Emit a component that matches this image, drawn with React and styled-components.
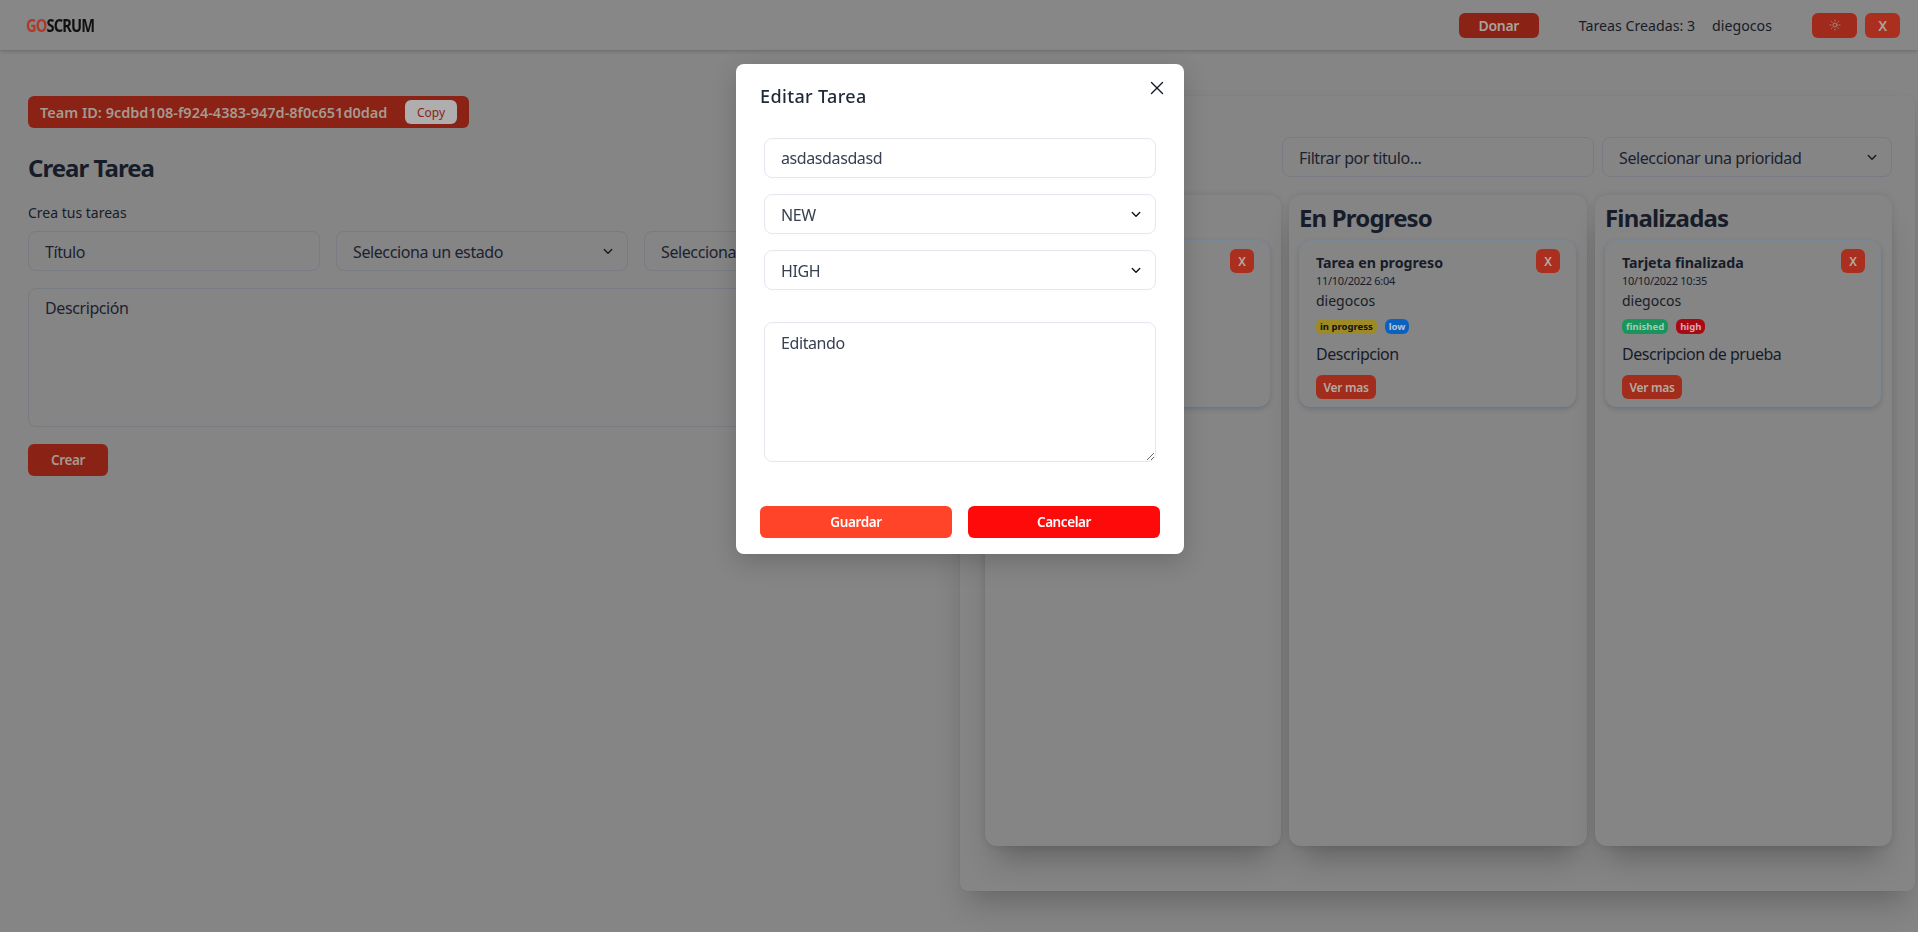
import { Sun, X } from 'lucide-react';
import styled, { createGlobalStyle } from 'styled-components';

const chevron = (color) =>
  `url("data:image/svg+xml,%3csvg xmlns='http://www.w3.org/2000/svg' viewBox='0 0 12 8'%3e%3cpath fill='none' stroke='${color}' stroke-width='1.7' stroke-linecap='round' stroke-linejoin='round' d='M1.5 1.5 6 6l4.5-4.5'/%3e%3c/svg%3e")`;

const GlobalStyle = createGlobalStyle`
  * {
    box-sizing: border-box;
  }

  html,
  body {
    margin: 0;
    height: 100%;
    overflow: hidden;
    background: #858585;
    font-family: "Noto Sans", "Open Sans", sans-serif;
    color: #171c28;
  }
`;

const Page = styled.div`
  width: 1918px;
  height: 932px;
  background: #858585;
`;

const Header = styled.header`
  display: flex;
  align-items: center;
  justify-content: space-between;
  height: 50px;
  padding: 0 18px 0 26px;
  background: #878787;
  box-shadow: 0 1px 4px rgba(0, 0, 0, 0.22);
`;

const Logo = styled.div`
  font-size: 17px;
  font-weight: 700;
  letter-spacing: -0.95px;
  color: #111;
  filter: blur(0.35px);
  transform: scaleX(0.86);
  transform-origin: left center;

  span {
    color: #ae3a2a;
  }
`;

const HeaderRight = styled.div`
  display: flex;
  align-items: center;
`;

const HeaderText = styled.span`
  font-size: 14.2px;
  margin-left: ${(props) => props.$gap}px;
`;

const HeaderButton = styled.button`
  display: flex;
  align-items: center;
  justify-content: center;
  width: ${(props) => props.$width}px;
  height: 25px;
  margin-left: ${(props) => props.$gap}px;
  border: none;
  border-radius: 6px;
  background: ${(props) => props.$bg};
  color: #a9a29a;
  font: inherit;
  font-size: 14px;
  font-weight: 600;
  letter-spacing: -0.025em;
`;

const Main = styled.main`
  display: grid;
  grid-template-columns: 960px 955px;
`;

const LeftSection = styled.section`
  padding: 46px 24px 0 28px;
`;

const TeamBar = styled.div`
  display: flex;
  align-items: center;
  justify-content: space-between;
  width: 441px;
  height: 32px;
  padding: 0 12px;
  border-radius: 6px;
  background: #8a2316;
  color: #a49a90;
  font-size: 14.5px;
  font-weight: 600;
`;

const CopyButton = styled.button`
  width: 52px;
  height: 24px;
  border: none;
  border-radius: 6px;
  background: #aeaeae;
  color: #8a2316;
  font: inherit;
  font-size: 12px;
  font-weight: 400;
`;

const PageTitle = styled.h2`
  margin: 24px 0 0;
  font-size: 24px;
  line-height: 32px;
  font-weight: 700;
  letter-spacing: -0.04em;
`;

const Hint = styled.p`
  margin: 19px 0 0;
  font-size: 14px;
  line-height: 20px;
`;

const FormRow = styled.div`
  display: grid;
  grid-template-columns: repeat(3, 1fr);
  gap: 16px;
  margin-top: 8px;
`;

const fieldBase = `
  display: block;
  height: 40px;
  padding: 2px 16px 0;
  border-radius: 8px;
  font-family: inherit;
  font-size: 16px;
  letter-spacing: -0.025em;
  outline: none;
`;

const DimInput = styled.input`
  ${fieldBase}
  width: 100%;
  border: 1px solid #787b82;
  background: transparent;

  &::placeholder {
    color: #1c2230;
    opacity: 1;
  }
`;

const DimSelect = styled.select`
  ${fieldBase}
  width: ${(props) => props.$width || '100%'};
  appearance: none;
  border: 1px solid #787b82;
  color: #1c2230;
  background: ${chevron('%23171c28')} no-repeat right 14px center / 10px 7px;
`;

const DimTextarea = styled.textarea`
  display: block;
  width: 100%;
  height: 139px;
  margin-top: 17px;
  padding: 8px 16px;
  border: 1px solid #787b82;
  border-radius: 8px;
  background: transparent;
  font-family: inherit;
  font-size: 16px;
  letter-spacing: -0.025em;
  resize: none;
  outline: none;

  &::placeholder {
    color: #1c2230;
    opacity: 1;
  }
`;

const CreateButton = styled.button`
  display: block;
  width: 80px;
  height: 32px;
  margin-top: 17px;
  border: none;
  border-radius: 6px;
  background: #8a2316;
  color: #a49a90;
  font: inherit;
  font-size: 13.5px;
  font-weight: 600;
  letter-spacing: -0.03em;
`;

const BoardPanel = styled.section`
  height: 795px;
  margin-top: 46px;
  padding: 41px 23px 0 25px;
  border-radius: 8px;
  background: #858585;
  box-shadow: 0 18px 30px -8px rgba(0, 0, 0, 0.24), 0 0 2px rgba(0, 0, 0, 0.04);
`;

const FilterRow = styled.div`
  display: flex;
  justify-content: flex-end;
  gap: 8px;
`;

const FilterInput = styled(DimInput)`
  width: 312px;
`;

const Columns = styled.div`
  display: grid;
  grid-template-columns: 296px 298px 297px;
  gap: 8px;
  margin-top: 18px;
`;

const Column = styled.div`
  height: 651px;
  padding: 7px 11px 8px 10px;
  border-radius: 12px;
  background: #858585;
  box-shadow: 0 22px 30px -10px rgba(0, 0, 0, 0.26), 0 0 6px rgba(0, 0, 0, 0.1);
`;

const ColumnTitle = styled.h3`
  margin: 0 0 6px;
  font-size: 24px;
  line-height: 32px;
  font-weight: 700;
  letter-spacing: -0.035em;
`;

const Card = styled.article`
  position: relative;
  height: 167px;
  padding: 12px 16px 8px;
  border: 1px solid #7a8795;
  border-radius: 12px;
  box-shadow: 0 2px 5px rgba(0, 0, 0, 0.16);
`;

const DeleteButton = styled.button`
  position: absolute;
  top: 8px;
  right: 15px;
  width: 24px;
  height: 24px;
  border: none;
  border-radius: 6px;
  background: #ab2f1e;
  color: #b3aba3;
  font: inherit;
  font-size: 12px;
  font-weight: 600;
`;

const CardTitle = styled.h4`
  margin: 0;
  font-size: 14.2px;
  line-height: 20px;
  font-weight: 700;
`;

const CardDate = styled.div`
  font-size: 11px;
  line-height: 15px;
  letter-spacing: -0.025em;
`;

const CardUser = styled.div`
  margin-top: 3px;
  font-size: 14px;
  line-height: 20px;
`;

const Chips = styled.div`
  display: flex;
  gap: 8px;
  margin-top: 8px;
`;

const chipColors = {
  progress: ['#9e8a25', '#111'],
  low: ['#0a62c0', '#b5c6d8'],
  finished: ['#17955a', '#a9c9b9'],
  high: ['#a80a14', '#d8a9b7'],
};

const Chip = styled.span`
  height: 15px;
  padding: 0 4px;
  border-radius: 6px;
  background: ${(props) => chipColors[props.$kind][0]};
  color: ${(props) => chipColors[props.$kind][1]};
  font-size: 9.5px;
  line-height: 15px;
  font-weight: 700;
`;

const CardText = styled.p`
  margin: 8px 0 0;
  font-size: 16px;
  line-height: 24px;
  letter-spacing: -0.03em;
`;

const MoreButton = styled.button`
  display: block;
  width: 60px;
  height: 24px;
  margin-top: 9px;
  border: none;
  border-radius: 6px;
  background: #a22d1d;
  color: #b3aba3;
  font: inherit;
  font-size: 12px;
  font-weight: 600;
  letter-spacing: -0.025em;
`;

const Backdrop = styled.div`
  position: fixed;
  inset: 0;
  display: flex;
  justify-content: center;
  align-items: flex-start;
  padding: 64px 0 0 2px;
`;

const Modal = styled.div`
  position: relative;
  width: 448px;
  height: 490px;
  padding: 20px 24px 24px;
  border-radius: 8px;
  background: #fff;
  box-shadow: 0 8px 24px rgba(0, 0, 0, 0.18);
`;

const ModalTitle = styled.h3`
  margin: 0;
  font-size: 18px;
  line-height: 24px;
  font-weight: 500;
  letter-spacing: 0.02em;
  color: #1f2937;
`;

const CloseButton = styled.button`
  position: absolute;
  top: 10px;
  right: 13px;
  display: flex;
  padding: 3px;
  border: none;
  background: none;
  color: #111827;
`;

const ModalForm = styled.form`
  display: flex;
  flex-direction: column;
  gap: 16px;
  margin-top: 30px;
  padding: 0 4px;
`;

const ModalInput = styled.input`
  ${fieldBase}
  width: 100%;
  padding-top: 0;
  border: 1px solid #e5e7ef;
  color: #374151;
`;

const ModalSelect = styled.select`
  ${fieldBase}
  width: 100%;
  appearance: none;
  border: 1px solid #e5e7ef;
  color: #374151;
  background: #fff ${chevron('%23111827')} no-repeat right 14px center / 10px 7px;
`;

const ModalTextarea = styled.textarea`
  display: block;
  width: 100%;
  height: 140px;
  margin-top: 16px;
  padding: 7px 16px;
  border: 1px solid #e5e7ef;
  border-radius: 8px;
  color: #374151;
  font-family: inherit;
  font-size: 16px;
  line-height: 26px;
  letter-spacing: -0.025em;
  outline: none;
`;

const ModalActions = styled.div`
  display: grid;
  grid-template-columns: 192px 192px;
  gap: 16px;
  margin-top: 44px;
`;

const ModalButton = styled.button`
  height: 32px;
  border: none;
  border-radius: 6px;
  background: ${(props) => props.$bg};
  color: #fff;
  font: inherit;
  font-size: 13.5px;
  font-weight: 600;
  letter-spacing: -0.03em;
`;

const tasks = [
  {
    column: 'Nuevas',
    title: 'Tarea nueva',
    date: '11/10/2022 6:03',
    chips: [['new', 'progress'], ['high', 'high']],
    text: 'Editando',
  },
  {
    column: 'En Progreso',
    title: 'Tarea en progreso',
    date: '11/10/2022 6:04',
    chips: [['in progress', 'progress'], ['low', 'low']],
    text: 'Descripcion',
  },
  {
    column: 'Finalizadas',
    title: 'Tarjeta finalizada',
    date: '10/10/2022 10:35',
    chips: [['finished', 'finished'], ['high', 'high']],
    text: 'Descripcion de prueba',
  },
];

function App() {
  return (
    <Page>
      <GlobalStyle />
      <Header>
        <Logo>
          <span>GO</span>SCRUM
        </Logo>
        <HeaderRight>
          <HeaderButton $width={80} $gap={0} $bg="#8a2316">Donar</HeaderButton>
          <HeaderText $gap={40}>Tareas Creadas: 3</HeaderText>
          <HeaderText $gap={17}>diegocos</HeaderText>
          <HeaderButton $width={45} $gap={40} $bg="#a02a1b">
            <Sun size={12} strokeWidth={1.5} />
          </HeaderButton>
          <HeaderButton $width={35} $gap={8} $bg="#ab2f1e">X</HeaderButton>
        </HeaderRight>
      </Header>

      <Main>
        <LeftSection>
          <TeamBar>
            Team ID: 9cdbd108-f924-4383-947d-8f0c651d0dad
            <CopyButton>Copy</CopyButton>
          </TeamBar>
          <PageTitle>Crear Tarea</PageTitle>
          <Hint>Crea tus tareas</Hint>
          <FormRow>
            <DimInput placeholder="Título" />
            <DimSelect>
              <option>Selecciona un estado</option>
            </DimSelect>
            <DimSelect>
              <option>Selecciona una prioridad</option>
            </DimSelect>
          </FormRow>
          <DimTextarea placeholder="Descripción" />
          <CreateButton>Crear</CreateButton>
        </LeftSection>

        <BoardPanel>
          <FilterRow>
            <FilterInput placeholder="Filtrar por titulo..." />
            <DimSelect $width="290px">
              <option>Seleccionar una prioridad</option>
            </DimSelect>
          </FilterRow>
          <Columns>
            {tasks.map((task) => (
              <Column key={task.column}>
                <ColumnTitle>{task.column}</ColumnTitle>
                <Card>
                  <DeleteButton>X</DeleteButton>
                  <CardTitle>{task.title}</CardTitle>
                  <CardDate>{task.date}</CardDate>
                  <CardUser>diegocos</CardUser>
                  <Chips>
                    {task.chips.map(([label, kind]) => (
                      <Chip key={label} $kind={kind}>{label}</Chip>
                    ))}
                  </Chips>
                  <CardText>{task.text}</CardText>
                  <MoreButton>Ver mas</MoreButton>
                </Card>
              </Column>
            ))}
          </Columns>
        </BoardPanel>
      </Main>

      <Backdrop>
        <Modal>
          <ModalTitle>Editar Tarea</ModalTitle>
          <CloseButton type="button">
            <X size={22} strokeWidth={1.5} />
          </CloseButton>
          <ModalForm>
            <ModalInput defaultValue="asdasdasdasd" />
            <ModalSelect defaultValue="NEW">
              <option>NEW</option>
              <option>IN PROGRESS</option>
              <option>FINISHED</option>
            </ModalSelect>
            <ModalSelect defaultValue="HIGH">
              <option>HIGH</option>
              <option>MEDIUM</option>
              <option>LOW</option>
            </ModalSelect>
            <ModalTextarea defaultValue="Editando" />
          </ModalForm>
          <ModalActions>
            <ModalButton $bg="#ff4429">Guardar</ModalButton>
            <ModalButton $bg="#ff0a0a">Cancelar</ModalButton>
          </ModalActions>
        </Modal>
      </Backdrop>
    </Page>
  );
}

export default App;
